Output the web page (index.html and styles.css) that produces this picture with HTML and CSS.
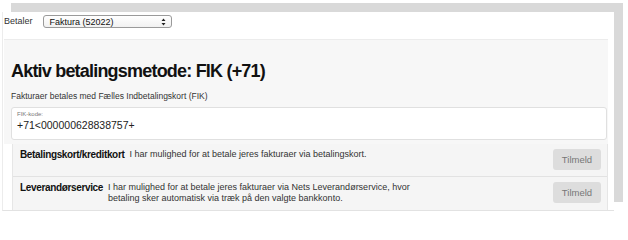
FILE: index.html
```html
<!DOCTYPE html>
<html lang="da">
<head>
<meta charset="utf-8">
<link rel="stylesheet" href="styles.css">
</head>
<body>
<div class="panel">
  <div class="payer">
    <span class="payer-label">Betaler</span>
    <div class="select">
      <span>Faktura (52022)</span>
      <svg class="arrows" width="5" height="8" viewBox="0 0 5 8"><path d="M0.5 3 L2.5 0.5 L4.5 3 Z M0.5 5 L2.5 7.5 L4.5 5 Z" fill="#222"/></svg>
    </div>
  </div>
  <div class="section">
    <h1 class="title">Aktiv betalingsmetode: FIK (+71)</h1>
    <p class="lead">Fakturaer betales med Fælles Indbetalingskort (FIK)</p>
    <div class="fik">
      <div class="fik-label">FIK-kode:</div>
      <div class="fik-value">+71&lt;000000628838757+</div>
    </div>
  </div>
  <div class="methods">
    <div class="method">
      <div class="method-name">Betalingskort/kreditkort</div>
      <div class="method-desc">I har mulighed for at betale jeres fakturaer via betalingskort.</div>
      <button class="btn">Tilmeld</button>
    </div>
    <div class="method">
      <div class="method-name">Leverandørservice</div>
      <div class="method-desc">I har mulighed for at betale jeres fakturaer via Nets Leverandørservice, hvor betaling sker automatisk via træk på den valgte bankkonto.</div>
      <button class="btn">Tilmeld</button>
    </div>
  </div>
</div>
</body>
</html>
```
FILE: styles.css
```css
html, body {
  margin: 0;
  padding: 0;
  background: #ffffff;
}
body {
  font-family: "Liberation Sans", Arial, sans-serif;
  color: #222;
}
.panel {
  margin-top: 12px;
  margin-left: 2px;
  width: 612px;
  height: 199px;
  background: #ffffff;
  border-left: 1px solid #ececec;
  border-bottom: 1px solid #e2e2e2;
  box-shadow: 9px -9px 0 #d9d9d9;
  box-sizing: border-box;
  padding: 0 6px 0 1px;
}
.payer {
  height: 27px;
  box-sizing: border-box;
  padding-top: 3px;
  display: flex;
  align-items: flex-start;
  gap: 10px;
}
.payer-label {
  font-size: 9px;
  color: #333;
  height: 13px;
  line-height: 13px;
}
.select {
  width: 129px;
  height: 13px;
  box-sizing: border-box;
  border: 1px solid #9a9a9a;
  border-radius: 3px;
  background: linear-gradient(#ffffff, #f1f1f1);
  display: flex;
  align-items: center;
  justify-content: space-between;
  padding: 0 5px 0 6px;
  font-size: 9px;
  color: #111;
}
.arrows {
  display: block;
}
.section {
  background: #f7f7f7;
  border-top: 1px solid #ececec;
  padding: 0 1px 4px 7px;
}
.title {
  margin: 0;
  padding-top: 19px;
  font-size: 18px;
  letter-spacing: -0.8px;
  font-weight: bold;
  line-height: 24px;
  color: #111;
}
.lead {
  margin: 7px 0 0;
  font-size: 8.5px;
  line-height: 12px;
  color: #333;
}
.fik {
  margin-top: 5px;
  background: #ffffff;
  border: 1px solid #e0e0e0;
  border-radius: 3px;
  height: 33px;
  box-sizing: border-box;
  padding: 3px 5px 0;
}
.fik-label {
  font-size: 6px;
  color: #777;
  line-height: 7px;
}
.fik-value {
  font-size: 10.5px;
  line-height: 15px;
  color: #222;
}
.methods {
  margin-left: 8px;
  border-left: 1px solid #e6e6e6;
  border-right: 1px solid #e6e6e6;
}
.method {
  display: flex;
  align-items: flex-start;
  background: #f5f5f5;
  border-bottom: 1px solid #e2e2e2;
  height: 33px;
  box-sizing: border-box;
  padding: 4px 6px 0 7px;
}
.method:last-child {
  border-bottom: none;
}
.method-name {
  font-size: 10px;
  letter-spacing: -0.35px;
  font-weight: bold;
  color: #111;
  line-height: 14px;
  white-space: nowrap;
  margin-right: 5px;
}
.method-desc {
  flex: 0 1 306px;
  font-size: 9px;
  line-height: 11px;
  color: #333;
  margin-top: 1px;
}
.btn {
  margin-left: auto;
  margin-top: 1px;
  width: 48px;
  height: 21px;
  border: none;
  border-radius: 3px;
  background: #dddddd;
  color: #777;
  font-family: "Liberation Sans", Arial, sans-serif;
  font-size: 9.5px;
  padding: 0;
}
```
